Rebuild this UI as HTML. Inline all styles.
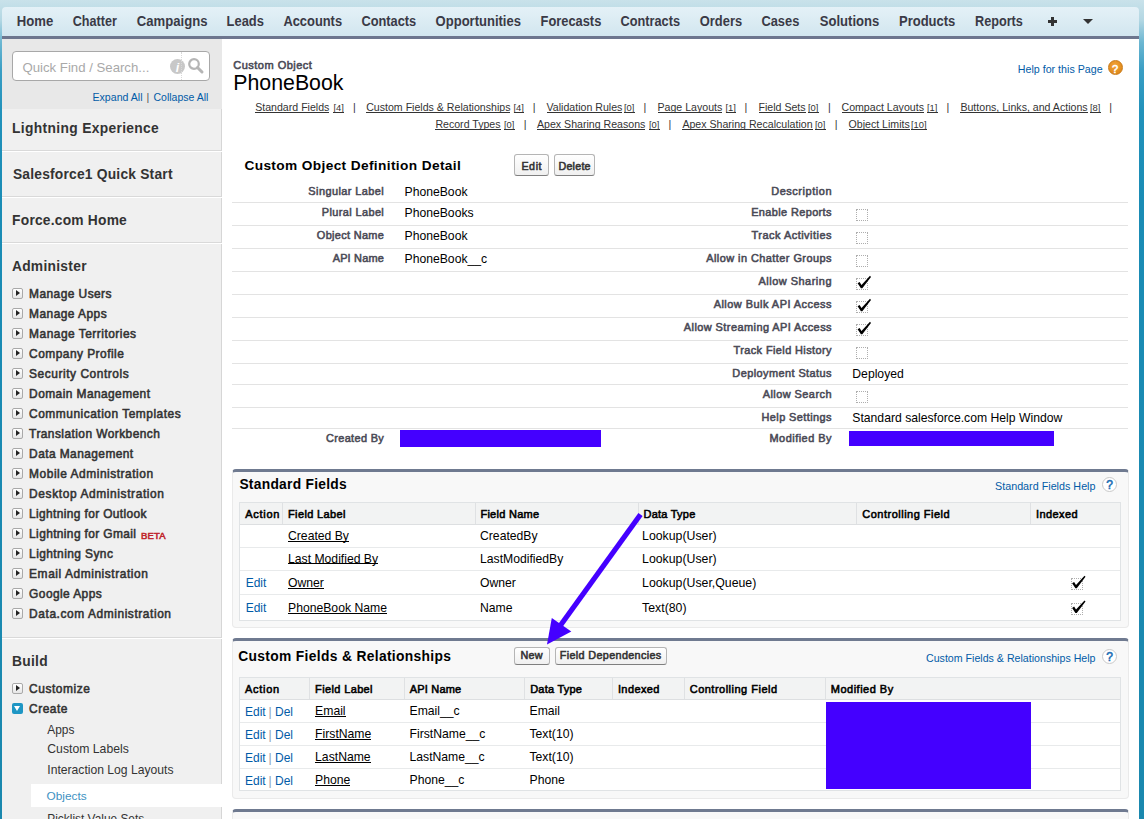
<!DOCTYPE html>
<html><head><meta charset="utf-8"><style>
html,body{margin:0;padding:0;}
body{width:1144px;height:819px;overflow:hidden;position:relative;font-family:"Liberation Sans",sans-serif;
background:linear-gradient(#c9e2ea 0px,#b3d7e3 20px,#6db7d2 42px,#3a9ec4 70px,#2292bb 110px,#1a8cb5 200px,#1a88ae 819px);}
.t{position:absolute;white-space:nowrap;}
.r{position:absolute;}
.btn{position:absolute;box-sizing:border-box;border:1px solid #b5b5b5;border-bottom-color:#7f7f7f;border-radius:3px;background:linear-gradient(#ffffff,#f0f0f0);
 color:#333;font-weight:bold;text-align:center;}
.panel{position:absolute;box-sizing:border-box;background:#f8f8f8;border:1px solid #eaeaea;border-top:3px solid #6f7a90;border-radius:4px;}
</style></head><body>
<div class="r" style="left:2px;top:7px;width:1137px;height:29px;background:linear-gradient(#e4f1f7,#d2e6ef);border-radius:4px 4px 0 0;"></div>
<div class="r" style="left:2px;top:36px;width:1137px;height:3px;background:#6d768e;"></div>
<div class="r" style="left:2px;top:39px;width:1137px;height:780px;background:#fff;"></div>
<div class="r" style="left:1048px;top:20px;width:9px;height:3px;background:#333;"></div>
<div class="r" style="left:1051px;top:17px;width:3px;height:9px;background:#333;"></div>
<div class="r" style="left:1083px;top:19px;width:0;height:0;border-left:5px solid transparent;border-right:5px solid transparent;border-top:5px solid #333;"></div>
<div class="r" style="left:2px;top:39px;width:220px;height:70px;background:#e8e8e8;"></div>
<div class="r" style="left:2px;top:109px;width:219px;height:41px;background:#f0f0f0;border-right:1px solid #d6d6d6;border-bottom:1px solid #d9d9d9;"></div>
<div class="r" style="left:2px;top:152px;width:219px;height:44px;background:#f0f0f0;border-right:1px solid #d6d6d6;border-bottom:1px solid #d9d9d9;"></div>
<div class="r" style="left:2px;top:198px;width:219px;height:44px;background:#f0f0f0;border-right:1px solid #d6d6d6;border-bottom:1px solid #d9d9d9;"></div>
<div class="r" style="left:2px;top:244px;width:219px;height:393px;background:#f0f0f0;border-right:1px solid #d6d6d6;border-bottom:1px solid #d9d9d9;"></div>
<div class="r" style="left:2px;top:639px;width:219px;height:180px;background:#f0f0f0;border-right:1px solid #d6d6d6;border-bottom:1px solid #d9d9d9;"></div>
<div class="r" style="left:12px;top:51px;width:196px;height:28px;background:#fff;border:1px solid #a8a8a8;border-radius:4px;"></div>
<div class="r" style="left:170px;top:59px;width:15px;height:15px;border-radius:50%;background:#c8c8c8;"></div>
<div class="r" style="left:181px;top:52px;width:0px;height:28px;border-left:1px dotted #d8d8d8;"></div>
<svg class="r" style="left:187px;top:57px" width="18" height="18" viewBox="0 0 18 18"><circle cx="7" cy="7" r="4.8" fill="none" stroke="#b5b5b5" stroke-width="2.2"/><line x1="10.5" y1="10.5" x2="15" y2="15" stroke="#b5b5b5" stroke-width="3" stroke-linecap="round"/></svg>
<div class="r" style="left:12px;top:288.1px;width:9px;height:9px;border:1px solid #a9a9a9;border-radius:2px;background:linear-gradient(#fff,#e6e6e6);"></div>
<div class="r" style="left:16px;top:290.1px;width:0;height:0;border-top:3px solid transparent;border-bottom:3px solid transparent;border-left:4px solid #222;"></div>
<div class="r" style="left:12px;top:308.1px;width:9px;height:9px;border:1px solid #a9a9a9;border-radius:2px;background:linear-gradient(#fff,#e6e6e6);"></div>
<div class="r" style="left:16px;top:310.1px;width:0;height:0;border-top:3px solid transparent;border-bottom:3px solid transparent;border-left:4px solid #222;"></div>
<div class="r" style="left:12px;top:328.1px;width:9px;height:9px;border:1px solid #a9a9a9;border-radius:2px;background:linear-gradient(#fff,#e6e6e6);"></div>
<div class="r" style="left:16px;top:330.1px;width:0;height:0;border-top:3px solid transparent;border-bottom:3px solid transparent;border-left:4px solid #222;"></div>
<div class="r" style="left:12px;top:348.1px;width:9px;height:9px;border:1px solid #a9a9a9;border-radius:2px;background:linear-gradient(#fff,#e6e6e6);"></div>
<div class="r" style="left:16px;top:350.1px;width:0;height:0;border-top:3px solid transparent;border-bottom:3px solid transparent;border-left:4px solid #222;"></div>
<div class="r" style="left:12px;top:368.1px;width:9px;height:9px;border:1px solid #a9a9a9;border-radius:2px;background:linear-gradient(#fff,#e6e6e6);"></div>
<div class="r" style="left:16px;top:370.1px;width:0;height:0;border-top:3px solid transparent;border-bottom:3px solid transparent;border-left:4px solid #222;"></div>
<div class="r" style="left:12px;top:388.1px;width:9px;height:9px;border:1px solid #a9a9a9;border-radius:2px;background:linear-gradient(#fff,#e6e6e6);"></div>
<div class="r" style="left:16px;top:390.1px;width:0;height:0;border-top:3px solid transparent;border-bottom:3px solid transparent;border-left:4px solid #222;"></div>
<div class="r" style="left:12px;top:408.1px;width:9px;height:9px;border:1px solid #a9a9a9;border-radius:2px;background:linear-gradient(#fff,#e6e6e6);"></div>
<div class="r" style="left:16px;top:410.1px;width:0;height:0;border-top:3px solid transparent;border-bottom:3px solid transparent;border-left:4px solid #222;"></div>
<div class="r" style="left:12px;top:428.1px;width:9px;height:9px;border:1px solid #a9a9a9;border-radius:2px;background:linear-gradient(#fff,#e6e6e6);"></div>
<div class="r" style="left:16px;top:430.1px;width:0;height:0;border-top:3px solid transparent;border-bottom:3px solid transparent;border-left:4px solid #222;"></div>
<div class="r" style="left:12px;top:448.1px;width:9px;height:9px;border:1px solid #a9a9a9;border-radius:2px;background:linear-gradient(#fff,#e6e6e6);"></div>
<div class="r" style="left:16px;top:450.1px;width:0;height:0;border-top:3px solid transparent;border-bottom:3px solid transparent;border-left:4px solid #222;"></div>
<div class="r" style="left:12px;top:468.1px;width:9px;height:9px;border:1px solid #a9a9a9;border-radius:2px;background:linear-gradient(#fff,#e6e6e6);"></div>
<div class="r" style="left:16px;top:470.1px;width:0;height:0;border-top:3px solid transparent;border-bottom:3px solid transparent;border-left:4px solid #222;"></div>
<div class="r" style="left:12px;top:488.1px;width:9px;height:9px;border:1px solid #a9a9a9;border-radius:2px;background:linear-gradient(#fff,#e6e6e6);"></div>
<div class="r" style="left:16px;top:490.1px;width:0;height:0;border-top:3px solid transparent;border-bottom:3px solid transparent;border-left:4px solid #222;"></div>
<div class="r" style="left:12px;top:508.1px;width:9px;height:9px;border:1px solid #a9a9a9;border-radius:2px;background:linear-gradient(#fff,#e6e6e6);"></div>
<div class="r" style="left:16px;top:510.1px;width:0;height:0;border-top:3px solid transparent;border-bottom:3px solid transparent;border-left:4px solid #222;"></div>
<div class="r" style="left:12px;top:528.1px;width:9px;height:9px;border:1px solid #a9a9a9;border-radius:2px;background:linear-gradient(#fff,#e6e6e6);"></div>
<div class="r" style="left:16px;top:530.1px;width:0;height:0;border-top:3px solid transparent;border-bottom:3px solid transparent;border-left:4px solid #222;"></div>
<div class="r" style="left:12px;top:548.1px;width:9px;height:9px;border:1px solid #a9a9a9;border-radius:2px;background:linear-gradient(#fff,#e6e6e6);"></div>
<div class="r" style="left:16px;top:550.1px;width:0;height:0;border-top:3px solid transparent;border-bottom:3px solid transparent;border-left:4px solid #222;"></div>
<div class="r" style="left:12px;top:568.1px;width:9px;height:9px;border:1px solid #a9a9a9;border-radius:2px;background:linear-gradient(#fff,#e6e6e6);"></div>
<div class="r" style="left:16px;top:570.1px;width:0;height:0;border-top:3px solid transparent;border-bottom:3px solid transparent;border-left:4px solid #222;"></div>
<div class="r" style="left:12px;top:588.1px;width:9px;height:9px;border:1px solid #a9a9a9;border-radius:2px;background:linear-gradient(#fff,#e6e6e6);"></div>
<div class="r" style="left:16px;top:590.1px;width:0;height:0;border-top:3px solid transparent;border-bottom:3px solid transparent;border-left:4px solid #222;"></div>
<div class="r" style="left:12px;top:608.1px;width:9px;height:9px;border:1px solid #a9a9a9;border-radius:2px;background:linear-gradient(#fff,#e6e6e6);"></div>
<div class="r" style="left:16px;top:610.1px;width:0;height:0;border-top:3px solid transparent;border-bottom:3px solid transparent;border-left:4px solid #222;"></div>
<div class="r" style="left:12px;top:683.3px;width:9px;height:9px;border:1px solid #a9a9a9;border-radius:2px;background:linear-gradient(#fff,#e6e6e6);"></div>
<div class="r" style="left:16px;top:685.3px;width:0;height:0;border-top:3px solid transparent;border-bottom:3px solid transparent;border-left:4px solid #222;"></div>
<div class="r" style="left:12px;top:703px;width:11px;height:11px;background:#1e96c4;border-radius:2px;"></div>
<div class="r" style="left:14px;top:706px;width:0;height:0;border-left:3.5px solid transparent;border-right:3.5px solid transparent;border-top:5px solid #fff;"></div>
<div class="r" style="left:31px;top:784px;width:191px;height:23px;background:#fff;"></div>
<div class="r" style="left:1107.5px;top:60px;width:15px;height:15px;border-radius:50%;background:radial-gradient(circle at 45% 35%,#f3a43a,#d8800f);box-sizing:border-box;border:1px solid #c97a18;"></div>
<div class="btn" style="left:514px;top:154px;width:35px;height:22px;"></div>
<div class="btn" style="left:554px;top:154px;width:41px;height:22px;"></div>
<div class="r" style="left:232px;top:202px;width:896px;height:1px;background:#e3e3e3;"></div>
<div class="r" style="left:232px;top:225px;width:896px;height:1px;background:#e3e3e3;"></div>
<div class="r" style="left:232px;top:248px;width:896px;height:1px;background:#e3e3e3;"></div>
<div class="r" style="left:232px;top:271px;width:896px;height:1px;background:#e3e3e3;"></div>
<div class="r" style="left:232px;top:294px;width:896px;height:1px;background:#e3e3e3;"></div>
<div class="r" style="left:232px;top:317px;width:896px;height:1px;background:#e3e3e3;"></div>
<div class="r" style="left:232px;top:340px;width:896px;height:1px;background:#e3e3e3;"></div>
<div class="r" style="left:232px;top:363px;width:896px;height:1px;background:#e3e3e3;"></div>
<div class="r" style="left:232px;top:384px;width:896px;height:1px;background:#e3e3e3;"></div>
<div class="r" style="left:232px;top:407px;width:896px;height:1px;background:#e3e3e3;"></div>
<div class="r" style="left:232px;top:428px;width:896px;height:1px;background:#e3e3e3;"></div>
<div class="r" style="left:400px;top:430px;width:201px;height:17px;background:#4400ff;"></div>
<div class="r" style="left:856px;top:209px;width:12px;height:12px;border:1px dotted #9a9a9a;box-sizing:border-box;opacity:.8;"></div>
<div class="r" style="left:856px;top:232px;width:12px;height:12px;border:1px dotted #9a9a9a;box-sizing:border-box;opacity:.8;"></div>
<div class="r" style="left:856px;top:255px;width:12px;height:12px;border:1px dotted #9a9a9a;box-sizing:border-box;opacity:.8;"></div>
<div class="r" style="left:856px;top:278px;width:12px;height:12px;border:1px dotted #9a9a9a;box-sizing:border-box;opacity:.8;"></div>
<div class="r" style="left:856px;top:301px;width:12px;height:12px;border:1px dotted #9a9a9a;box-sizing:border-box;opacity:.8;"></div>
<div class="r" style="left:856px;top:324px;width:12px;height:12px;border:1px dotted #9a9a9a;box-sizing:border-box;opacity:.8;"></div>
<div class="r" style="left:856px;top:347px;width:12px;height:12px;border:1px dotted #9a9a9a;box-sizing:border-box;opacity:.8;"></div>
<div class="r" style="left:856px;top:390.5px;width:12px;height:12px;border:1px dotted #9a9a9a;box-sizing:border-box;opacity:.8;"></div>
<div class="r" style="left:849px;top:431px;width:205px;height:15px;background:#4400ff;"></div>
<div class="panel" style="left:232px;top:469px;width:897px;height:159px;"></div>
<div class="r" style="left:1102.0px;top:476.5px;width:13px;height:13px;border-radius:50%;border:1px solid #c9c9c9;background:#fff;"></div>
<div class="r" style="left:239px;top:502px;width:882px;height:118.5px;background:#fff;border:1px solid #e0e3e5;box-sizing:border-box;"></div>
<div class="r" style="left:240px;top:503px;width:880px;height:21px;background:#f2f3f3;border-bottom:1px solid #dddfe1;"></div>
<div class="r" style="left:282px;top:503px;width:1px;height:21px;background:#dfe1e3;"></div>
<div class="r" style="left:474.5px;top:503px;width:1px;height:21px;background:#dfe1e3;"></div>
<div class="r" style="left:637.5px;top:503px;width:1px;height:21px;background:#dfe1e3;"></div>
<div class="r" style="left:856px;top:503px;width:1px;height:21px;background:#dfe1e3;"></div>
<div class="r" style="left:1030px;top:503px;width:1px;height:21px;background:#dfe1e3;"></div>
<div class="r" style="left:240px;top:547px;width:880px;height:1px;background:#e8eaeb;"></div>
<div class="r" style="left:240px;top:570px;width:880px;height:1px;background:#e8eaeb;"></div>
<div class="r" style="left:240px;top:594px;width:880px;height:1px;background:#e8eaeb;"></div>
<div class="r" style="left:1070.5px;top:577.9px;width:12px;height:12px;border:1px dotted #9a9a9a;box-sizing:border-box;opacity:.8;"></div>
<div class="r" style="left:1070.5px;top:602.6px;width:12px;height:12px;border:1px dotted #9a9a9a;box-sizing:border-box;opacity:.8;"></div>
<div class="panel" style="left:232px;top:638px;width:897px;height:161px;"></div>
<div class="btn" style="left:513.5px;top:647px;width:36px;height:18px;"></div>
<div class="btn" style="left:554.5px;top:647px;width:112px;height:18px;"></div>
<div class="r" style="left:1102.0px;top:648.5px;width:13px;height:13px;border-radius:50%;border:1px solid #c9c9c9;background:#fff;"></div>
<div class="r" style="left:239px;top:677px;width:882px;height:114px;background:#fff;border:1px solid #e0e3e5;box-sizing:border-box;"></div>
<div class="r" style="left:240px;top:678px;width:880px;height:21px;background:#f2f3f3;border-bottom:1px solid #dddfe1;"></div>
<div class="r" style="left:309px;top:678px;width:1px;height:21px;background:#dfe1e3;"></div>
<div class="r" style="left:404px;top:678px;width:1px;height:21px;background:#dfe1e3;"></div>
<div class="r" style="left:524px;top:678px;width:1px;height:21px;background:#dfe1e3;"></div>
<div class="r" style="left:612px;top:678px;width:1px;height:21px;background:#dfe1e3;"></div>
<div class="r" style="left:684px;top:678px;width:1px;height:21px;background:#dfe1e3;"></div>
<div class="r" style="left:825px;top:678px;width:1px;height:21px;background:#dfe1e3;"></div>
<div class="r" style="left:240px;top:722px;width:880px;height:1px;background:#e8eaeb;"></div>
<div class="r" style="left:240px;top:745px;width:880px;height:1px;background:#e8eaeb;"></div>
<div class="r" style="left:240px;top:768px;width:880px;height:1px;background:#e8eaeb;"></div>
<div class="r" style="left:826px;top:702px;width:205px;height:87px;background:#4400ff;"></div>
<div class="panel" style="left:232px;top:809px;width:897px;height:30px;"></div>
<div class="r" style="left:255.2px;top:112px;width:74.2px;height:1px;background:#333;"></div><div class="r" style="left:333.4px;top:112px;width:10.5px;height:1px;background:#333;"></div><div class="r" style="left:366.2px;top:112px;width:144.3px;height:1px;background:#333;"></div><div class="r" style="left:513.5px;top:112px;width:10.5px;height:1px;background:#333;"></div><div class="r" style="left:546.6px;top:112px;width:75.8px;height:1px;background:#333;"></div><div class="r" style="left:624px;top:112px;width:10.5px;height:1px;background:#333;"></div><div class="r" style="left:657.5px;top:112px;width:64.8px;height:1px;background:#333;"></div><div class="r" style="left:725.5px;top:112px;width:10.5px;height:1px;background:#333;"></div><div class="r" style="left:758.5px;top:112px;width:47.1px;height:1px;background:#333;"></div><div class="r" style="left:808px;top:112px;width:10.5px;height:1px;background:#333;"></div><div class="r" style="left:841.5px;top:112px;width:82.5px;height:1px;background:#333;"></div><div class="r" style="left:927px;top:112px;width:10.5px;height:1px;background:#333;"></div><div class="r" style="left:960.4px;top:112px;width:127.3px;height:1px;background:#333;"></div><div class="r" style="left:1090px;top:112px;width:10.5px;height:1px;background:#333;"></div><div class="r" style="left:435.4px;top:129px;width:65.2px;height:1px;background:#333;"></div><div class="r" style="left:504px;top:129px;width:10.5px;height:1px;background:#333;"></div><div class="r" style="left:537px;top:129px;width:108.4px;height:1px;background:#333;"></div><div class="r" style="left:649px;top:129px;width:10.5px;height:1px;background:#333;"></div><div class="r" style="left:682.4px;top:129px;width:130.2px;height:1px;background:#333;"></div><div class="r" style="left:815px;top:129px;width:10.5px;height:1px;background:#333;"></div><div class="r" style="left:848.5px;top:129px;width:61.3px;height:1px;background:#333;"></div><div class="r" style="left:911px;top:129px;width:15.7px;height:1px;background:#333;"></div><div class="r" style="left:288px;top:541px;width:61.0px;height:1px;background:#000;"></div><div class="r" style="left:288px;top:563px;width:90.2px;height:1px;background:#000;"></div><div class="r" style="left:288px;top:588px;width:35.9px;height:1px;background:#000;"></div><div class="r" style="left:288px;top:613px;width:99.0px;height:1px;background:#000;"></div><div class="r" style="left:315.1px;top:716px;width:30.5px;height:1px;background:#000;"></div><div class="r" style="left:315.1px;top:739px;width:56.3px;height:1px;background:#000;"></div><div class="r" style="left:315.1px;top:762px;width:55.6px;height:1px;background:#000;"></div><div class="r" style="left:315.1px;top:785px;width:35.3px;height:1px;background:#000;"></div>
<svg class="r" style="left:0;top:0" width="1144" height="819"><polygon points="857.6,283.3 859.6,282.0 861.5,285.0 870.0,275.8 871.0,276.9 862.3,288.3 860.9,288.3" fill="#000"/><polygon points="857.6,306.3 859.6,305.0 861.5,308.0 870.0,298.8 871.0,299.9 862.3,311.3 860.9,311.3" fill="#000"/><polygon points="857.6,329.3 859.6,328.0 861.5,331.0 870.0,321.8 871.0,322.9 862.3,334.3 860.9,334.3" fill="#000"/><polygon points="1072.1,583.2 1074.1,581.9 1076.0,584.9 1084.5,575.7 1085.5,576.8 1076.8,588.2 1075.4,588.2" fill="#000"/><polygon points="1072.1,607.9 1074.1,606.6 1076.0,609.6 1084.5,600.4 1085.5,601.5 1076.8,612.9 1075.4,612.9" fill="#000"/></svg>
<svg class="r" style="left:0;top:0" width="1144" height="819"><text x="16.8" y="26" font-size="13.8" font-weight="bold" fill="#3a3a46" text-anchor="start" textLength="36.5" lengthAdjust="spacingAndGlyphs">Home</text><text x="72.7" y="26" font-size="13.8" font-weight="bold" fill="#3a3a46" text-anchor="start" textLength="44.1" lengthAdjust="spacingAndGlyphs">Chatter</text><text x="136.8" y="26" font-size="13.8" font-weight="bold" fill="#3a3a46" text-anchor="start" textLength="70.7" lengthAdjust="spacingAndGlyphs">Campaigns</text><text x="226.60000000000002" y="26" font-size="13.8" font-weight="bold" fill="#3a3a46" text-anchor="start" textLength="37.3" lengthAdjust="spacingAndGlyphs">Leads</text><text x="283.40000000000003" y="26" font-size="13.8" font-weight="bold" fill="#3a3a46" text-anchor="start" textLength="58.7" lengthAdjust="spacingAndGlyphs">Accounts</text><text x="361.40000000000003" y="26" font-size="13.8" font-weight="bold" fill="#3a3a46" text-anchor="start" textLength="54.8" lengthAdjust="spacingAndGlyphs">Contacts</text><text x="435.6" y="26" font-size="13.8" font-weight="bold" fill="#3a3a46" text-anchor="start" textLength="85.4" lengthAdjust="spacingAndGlyphs">Opportunities</text><text x="540.5999999999999" y="26" font-size="13.8" font-weight="bold" fill="#3a3a46" text-anchor="start" textLength="60.7" lengthAdjust="spacingAndGlyphs">Forecasts</text><text x="620.5999999999999" y="26" font-size="13.8" font-weight="bold" fill="#3a3a46" text-anchor="start" textLength="59.4" lengthAdjust="spacingAndGlyphs">Contracts</text><text x="699.8" y="26" font-size="13.8" font-weight="bold" fill="#3a3a46" text-anchor="start" textLength="42.3" lengthAdjust="spacingAndGlyphs">Orders</text><text x="761.4" y="26" font-size="13.8" font-weight="bold" fill="#3a3a46" text-anchor="start" textLength="37.9" lengthAdjust="spacingAndGlyphs">Cases</text><text x="819.8" y="26" font-size="13.8" font-weight="bold" fill="#3a3a46" text-anchor="start" textLength="59.4" lengthAdjust="spacingAndGlyphs">Solutions</text><text x="899.0" y="26" font-size="13.8" font-weight="bold" fill="#3a3a46" text-anchor="start" textLength="56.3" lengthAdjust="spacingAndGlyphs">Products</text><text x="975.0" y="26" font-size="13.8" font-weight="bold" fill="#3a3a46" text-anchor="start" textLength="47.9" lengthAdjust="spacingAndGlyphs">Reports</text><text x="22.5" y="71.8" font-size="13.2" fill="#a9a9a9" text-anchor="start">Quick Find / Search...</text><text x="177.5" y="72" font-size="12.5" font-weight="bold" fill="#fff" text-anchor="middle" font-family="Liberation Sans" font-style="italic">i</text><text x="92.5" y="101" font-size="10.6" fill="#015ba7" text-anchor="start">Expand All</text><text x="146.5" y="101" font-size="10.6" fill="#555" text-anchor="start">|</text><text x="153.5" y="101" font-size="10.5" fill="#015ba7" text-anchor="start">Collapse All</text><text x="12.1" y="133.3" font-size="13.8" font-weight="bold" fill="#333" text-anchor="start" textLength="146.7" lengthAdjust="spacing">Lightning Experience</text><text x="12.9" y="179" font-size="13.8" font-weight="bold" fill="#333" text-anchor="start" textLength="159.6" lengthAdjust="spacing">Salesforce1 Quick Start</text><text x="12.1" y="224.8" font-size="13.8" font-weight="bold" fill="#333" text-anchor="start" textLength="114.7" lengthAdjust="spacing">Force.com Home</text><text x="11.9" y="270.8" font-size="13.8" font-weight="bold" fill="#333" text-anchor="start" textLength="74.6" lengthAdjust="spacing">Administer</text><text x="29.1" y="297.6" font-size="11.95" stroke="#333" stroke-width="0.55" fill="#333" text-anchor="start" textLength="82.4" lengthAdjust="spacing">Manage Users</text><text x="29.1" y="317.6" font-size="11.95" stroke="#333" stroke-width="0.55" fill="#333" text-anchor="start" textLength="77.5" lengthAdjust="spacing">Manage Apps</text><text x="29.1" y="337.6" font-size="11.95" stroke="#333" stroke-width="0.55" fill="#333" text-anchor="start" textLength="106.9" lengthAdjust="spacing">Manage Territories</text><text x="29.1" y="357.6" font-size="11.95" stroke="#333" stroke-width="0.55" fill="#333" text-anchor="start" textLength="94.7" lengthAdjust="spacing">Company Profile</text><text x="29.1" y="377.6" font-size="11.95" stroke="#333" stroke-width="0.55" fill="#333" text-anchor="start" textLength="99.5" lengthAdjust="spacing">Security Controls</text><text x="29.1" y="397.6" font-size="11.95" stroke="#333" stroke-width="0.55" fill="#333" text-anchor="start" textLength="120.9" lengthAdjust="spacing">Domain Management</text><text x="29.1" y="417.6" font-size="11.95" stroke="#333" stroke-width="0.55" fill="#333" text-anchor="start" textLength="151.6" lengthAdjust="spacing">Communication Templates</text><text x="29.1" y="437.6" font-size="11.95" stroke="#333" stroke-width="0.55" fill="#333" text-anchor="start" textLength="130.7" lengthAdjust="spacing">Translation Workbench</text><text x="29.1" y="457.6" font-size="11.95" stroke="#333" stroke-width="0.55" fill="#333" text-anchor="start" textLength="104.1" lengthAdjust="spacing">Data Management</text><text x="29.1" y="477.6" font-size="11.95" stroke="#333" stroke-width="0.55" fill="#333" text-anchor="start" textLength="124.0" lengthAdjust="spacing">Mobile Administration</text><text x="29.1" y="497.6" font-size="11.95" stroke="#333" stroke-width="0.55" fill="#333" text-anchor="start" textLength="134.9" lengthAdjust="spacing">Desktop Administration</text><text x="29.1" y="517.6" font-size="11.95" stroke="#333" stroke-width="0.55" fill="#333" text-anchor="start" textLength="117.4" lengthAdjust="spacing">Lightning for Outlook</text><text x="29.1" y="537.6" font-size="11.95" stroke="#333" stroke-width="0.55" fill="#333" text-anchor="start" textLength="106.9" lengthAdjust="spacing">Lightning for Gmail</text><text x="141" y="538.6" font-size="9.5" stroke="#c0262c" stroke-width="0.55" fill="#c0262c" text-anchor="start" textLength="24.6" lengthAdjust="spacing">BETA</text><text x="29.1" y="557.6" font-size="11.95" stroke="#333" stroke-width="0.55" fill="#333" text-anchor="start" textLength="83.8" lengthAdjust="spacing">Lightning Sync</text><text x="29.1" y="577.6" font-size="11.95" stroke="#333" stroke-width="0.55" fill="#333" text-anchor="start" textLength="118.8" lengthAdjust="spacing">Email Administration</text><text x="29.1" y="597.6" font-size="11.95" stroke="#333" stroke-width="0.55" fill="#333" text-anchor="start" textLength="72.6" lengthAdjust="spacing">Google Apps</text><text x="29.1" y="617.6" font-size="11.95" stroke="#333" stroke-width="0.55" fill="#333" text-anchor="start" textLength="141.9" lengthAdjust="spacing">Data.com Administration</text><text x="11.9" y="665.9" font-size="13.8" font-weight="bold" fill="#333" text-anchor="start" textLength="35.7" lengthAdjust="spacing">Build</text><text x="29.1" y="692.9" font-size="11.95" stroke="#333" stroke-width="0.55" fill="#333" text-anchor="start" textLength="60.7" lengthAdjust="spacing">Customize</text><text x="29.1" y="712.9" font-size="11.95" stroke="#333" stroke-width="0.55" fill="#333" text-anchor="start" textLength="38.4" lengthAdjust="spacing">Create</text><text x="47.3" y="734.4" font-size="11.9" fill="#333" text-anchor="start">Apps</text><text x="47.3" y="753.4" font-size="11.9" fill="#333" text-anchor="start" textLength="81.5" lengthAdjust="spacingAndGlyphs">Custom Labels</text><text x="47.3" y="773.5" font-size="12.15" fill="#333" text-anchor="start">Interaction Log Layouts</text><text x="46.6" y="799.8" font-size="11.8" fill="#3d91c2" text-anchor="start">Objects</text><text x="47.3" y="822.5" font-size="11.9" fill="#333" text-anchor="start">Picklist Value Sets</text><text x="233.3" y="69" font-size="11.05" stroke="#4a4a56" stroke-width="0.55" fill="#4a4a56" text-anchor="start" textLength="78.59" lengthAdjust="spacing">Custom Object</text><text x="233.3" y="89.8" font-size="21.3" fill="#000" text-anchor="start">PhoneBook</text><text x="1102.6" y="72.6" font-size="10.6" fill="#015ba7" text-anchor="end" textLength="84.8" lengthAdjust="spacingAndGlyphs">Help for this Page</text><text x="1115" y="72.5" font-size="11" stroke="#fff" stroke-width="0.55" fill="#fff" text-anchor="middle" textLength="6.72" lengthAdjust="spacing">?</text><text x="255.2" y="110.7" font-size="10.6" fill="#333" text-anchor="start">Standard Fields</text><text x="333.4" y="110.7" font-size="9.4" fill="#333" text-anchor="start">[4]</text><text x="353.09999999999997" y="110.7" font-size="10.6" fill="#333" text-anchor="start">|</text><text x="366.2" y="110.7" font-size="10.6" fill="#333" text-anchor="start">Custom Fields &amp; Relationships</text><text x="513.5" y="110.7" font-size="9.4" fill="#333" text-anchor="start">[4]</text><text x="532.7" y="110.7" font-size="10.6" fill="#333" text-anchor="start">|</text><text x="546.6" y="110.7" font-size="10.6" fill="#333" text-anchor="start">Validation Rules</text><text x="624" y="110.7" font-size="9.4" fill="#333" text-anchor="start">[0]</text><text x="643.6" y="110.7" font-size="10.6" fill="#333" text-anchor="start">|</text><text x="657.5" y="110.7" font-size="10.6" fill="#333" text-anchor="start">Page Layouts</text><text x="725.5" y="110.7" font-size="9.4" fill="#333" text-anchor="start">[1]</text><text x="744.5" y="110.7" font-size="10.6" fill="#333" text-anchor="start">|</text><text x="758.5" y="110.7" font-size="10.6" fill="#333" text-anchor="start">Field Sets</text><text x="808" y="110.7" font-size="9.4" fill="#333" text-anchor="start">[0]</text><text x="828.0" y="110.7" font-size="10.6" fill="#333" text-anchor="start">|</text><text x="841.5" y="110.7" font-size="10.6" fill="#333" text-anchor="start">Compact Layouts</text><text x="927" y="110.7" font-size="9.4" fill="#333" text-anchor="start">[1]</text><text x="946.5" y="110.7" font-size="10.6" fill="#333" text-anchor="start">|</text><text x="960.4" y="110.7" font-size="10.6" fill="#333" text-anchor="start">Buttons, Links, and Actions</text><text x="1090" y="110.7" font-size="9.4" fill="#333" text-anchor="start">[8]</text><text x="1109.2" y="110.7" font-size="10.6" fill="#333" text-anchor="start">|</text><text x="435.4" y="127.8" font-size="10.6" fill="#333" text-anchor="start">Record Types</text><text x="504" y="127.8" font-size="9.4" fill="#333" text-anchor="start">[0]</text><text x="523.7" y="127.8" font-size="10.6" fill="#333" text-anchor="start">|</text><text x="537" y="127.8" font-size="10.6" fill="#333" text-anchor="start">Apex Sharing Reasons</text><text x="649" y="127.8" font-size="9.4" fill="#333" text-anchor="start">[0]</text><text x="668.5" y="127.8" font-size="10.6" fill="#333" text-anchor="start">|</text><text x="682.4" y="127.8" font-size="10.6" fill="#333" text-anchor="start">Apex Sharing Recalculation</text><text x="815" y="127.8" font-size="9.4" fill="#333" text-anchor="start">[0]</text><text x="834.7" y="127.8" font-size="10.6" fill="#333" text-anchor="start">|</text><text x="848.5" y="127.8" font-size="10.6" fill="#333" text-anchor="start">Object Limits</text><text x="911" y="127.8" font-size="9.4" fill="#333" text-anchor="start">[10]</text><text x="244.4" y="170" font-size="13.7" font-weight="bold" fill="#000" text-anchor="start" textLength="216.4" lengthAdjust="spacing">Custom Object Definition Detail</text><text x="531.5" y="169.852" font-size="10.7" stroke="#333" stroke-width="0.55" fill="#333" text-anchor="middle" textLength="20.21" lengthAdjust="spacing">Edit</text><text x="574.5" y="169.852" font-size="10.7" stroke="#333" stroke-width="0.55" fill="#333" text-anchor="middle" textLength="32.12" lengthAdjust="spacing">Delete</text><text x="383.8" y="195" font-size="10.95" stroke="#4a4a56" stroke-width="0.55" fill="#4a4a56" text-anchor="end" textLength="75.45" lengthAdjust="spacing">Singular Label</text><text x="404.5" y="196.3" font-size="12.2" fill="#000" text-anchor="start">PhoneBook</text><text x="383.8" y="216" font-size="10.95" stroke="#4a4a56" stroke-width="0.55" fill="#4a4a56" text-anchor="end" textLength="62.07" lengthAdjust="spacing">Plural Label</text><text x="404.5" y="217.3" font-size="12.2" fill="#000" text-anchor="start">PhoneBooks</text><text x="383.8" y="239" font-size="10.95" stroke="#4a4a56" stroke-width="0.55" fill="#4a4a56" text-anchor="end" textLength="66.94" lengthAdjust="spacing">Object Name</text><text x="404.5" y="240.3" font-size="12.2" fill="#000" text-anchor="start">PhoneBook</text><text x="383.8" y="262" font-size="10.95" stroke="#4a4a56" stroke-width="0.55" fill="#4a4a56" text-anchor="end" textLength="51.12" lengthAdjust="spacing">API Name</text><text x="404.5" y="263.3" font-size="12.2" fill="#000" text-anchor="start">PhoneBook__c</text><text x="383.8" y="442" font-size="10.95" stroke="#4a4a56" stroke-width="0.55" fill="#4a4a56" text-anchor="end" textLength="57.81" lengthAdjust="spacing">Created By</text><text x="831.5" y="195" font-size="10.95" stroke="#4a4a56" stroke-width="0.55" fill="#4a4a56" text-anchor="end" textLength="60.24" lengthAdjust="spacing">Description</text><text x="831.5" y="216" font-size="10.95" stroke="#4a4a56" stroke-width="0.55" fill="#4a4a56" text-anchor="end" textLength="80.32" lengthAdjust="spacing">Enable Reports</text><text x="831.5" y="239" font-size="10.95" stroke="#4a4a56" stroke-width="0.55" fill="#4a4a56" text-anchor="end" textLength="79.94" lengthAdjust="spacing">Track Activities</text><text x="831.5" y="262" font-size="10.95" stroke="#4a4a56" stroke-width="0.55" fill="#4a4a56" text-anchor="end" textLength="125.32" lengthAdjust="spacing">Allow in Chatter Groups</text><text x="831.5" y="285" font-size="10.95" stroke="#4a4a56" stroke-width="0.55" fill="#4a4a56" text-anchor="end" textLength="73.0" lengthAdjust="spacing">Allow Sharing</text><text x="831.5" y="308" font-size="10.95" stroke="#4a4a56" stroke-width="0.55" fill="#4a4a56" text-anchor="end" textLength="117.85" lengthAdjust="spacing">Allow Bulk API Access</text><text x="831.5" y="331" font-size="10.95" stroke="#4a4a56" stroke-width="0.55" fill="#4a4a56" text-anchor="end" textLength="147.67" lengthAdjust="spacing">Allow Streaming API Access</text><text x="831.5" y="354" font-size="10.95" stroke="#4a4a56" stroke-width="0.55" fill="#4a4a56" text-anchor="end" textLength="97.98" lengthAdjust="spacing">Track Field History</text><text x="831.5" y="376.5" font-size="10.95" stroke="#4a4a56" stroke-width="0.55" fill="#4a4a56" text-anchor="end" textLength="99.18" lengthAdjust="spacing">Deployment Status</text><text x="852.3" y="377.5" font-size="12.2" fill="#000" text-anchor="start">Deployed</text><text x="831.5" y="397.5" font-size="10.95" stroke="#4a4a56" stroke-width="0.55" fill="#4a4a56" text-anchor="end" textLength="68.76" lengthAdjust="spacing">Allow Search</text><text x="831.5" y="421" font-size="10.95" stroke="#4a4a56" stroke-width="0.55" fill="#4a4a56" text-anchor="end" textLength="69.97" lengthAdjust="spacing">Help Settings</text><text x="852.3" y="422" font-size="12.2" fill="#000" text-anchor="start">Standard salesforce.com Help Window</text><text x="831.5" y="442" font-size="10.95" stroke="#4a4a56" stroke-width="0.55" fill="#4a4a56" text-anchor="end" textLength="62.05" lengthAdjust="spacing">Modified By</text><text x="239.4" y="489" font-size="13.8" font-weight="bold" fill="#000" text-anchor="start" textLength="107.3" lengthAdjust="spacing">Standard Fields</text><text x="1095.5" y="490" font-size="10.7" fill="#015ba7" text-anchor="end" textLength="100.5" lengthAdjust="spacingAndGlyphs">Standard Fields Help</text><text x="1109.5" y="488.5" font-size="12" stroke="#1f6fb5" stroke-width="0.55" fill="#1f6fb5" text-anchor="middle" textLength="7.33" lengthAdjust="spacing">?</text><text x="245.2" y="517.7" font-size="11" stroke="#000" stroke-width="0.55" fill="#000" text-anchor="start" textLength="34.22" lengthAdjust="spacing">Action</text><text x="288" y="517.7" font-size="11" stroke="#000" stroke-width="0.55" fill="#000" text-anchor="start" textLength="57.45" lengthAdjust="spacing">Field Label</text><text x="480.4" y="517.7" font-size="11" stroke="#000" stroke-width="0.55" fill="#000" text-anchor="start" textLength="58.68" lengthAdjust="spacing">Field Name</text><text x="643.5" y="517.7" font-size="11" stroke="#000" stroke-width="0.55" fill="#000" text-anchor="start" textLength="51.76" lengthAdjust="spacing">Data Type</text><text x="862.3" y="517.7" font-size="11" stroke="#000" stroke-width="0.55" fill="#000" text-anchor="start" textLength="87.38" lengthAdjust="spacing">Controlling Field</text><text x="1036" y="517.7" font-size="11" stroke="#000" stroke-width="0.55" fill="#000" text-anchor="start" textLength="41.57" lengthAdjust="spacing">Indexed</text><text x="288" y="539.8" font-size="12.2" fill="#000" text-anchor="start">Created By</text><text x="480" y="539.8" font-size="12.2" fill="#000" text-anchor="start">CreatedBy</text><text x="642.1" y="539.8" font-size="12.3" fill="#000" text-anchor="start">Lookup(User)</text><text x="288" y="562.5" font-size="12.2" fill="#000" text-anchor="start">Last Modified By</text><text x="480" y="562.5" font-size="12.2" fill="#000" text-anchor="start">LastModifiedBy</text><text x="642.1" y="562.5" font-size="12.3" fill="#000" text-anchor="start">Lookup(User)</text><text x="245.7" y="586.9" font-size="12" fill="#015ba7" text-anchor="start">Edit</text><text x="288" y="586.9" font-size="12.2" fill="#000" text-anchor="start">Owner</text><text x="480" y="586.9" font-size="12.2" fill="#000" text-anchor="start">Owner</text><text x="642.1" y="586.9" font-size="12.3" fill="#000" text-anchor="start">Lookup(User,Queue)</text><text x="245.7" y="611.6" font-size="12" fill="#015ba7" text-anchor="start">Edit</text><text x="288" y="611.6" font-size="12.2" fill="#000" text-anchor="start">PhoneBook Name</text><text x="480" y="611.6" font-size="12.2" fill="#000" text-anchor="start">Name</text><text x="642.1" y="611.6" font-size="12.3" fill="#000" text-anchor="start">Text(80)</text><text x="238.2" y="661" font-size="13.8" font-weight="bold" fill="#000" text-anchor="start" textLength="212.8" lengthAdjust="spacing">Custom Fields &amp; Relationships</text><text x="531.5" y="659.388" font-size="10.8" stroke="#333" stroke-width="0.55" fill="#333" text-anchor="middle" textLength="22.21" lengthAdjust="spacing">New</text><text x="610.5" y="659.388" font-size="10.8" stroke="#333" stroke-width="0.55" fill="#333" text-anchor="middle" textLength="101.43" lengthAdjust="spacing">Field Dependencies</text><text x="1095.5" y="662.3" font-size="10.7" fill="#015ba7" text-anchor="end" textLength="169.5" lengthAdjust="spacingAndGlyphs">Custom Fields &amp; Relationships Help</text><text x="1109.5" y="660.5" font-size="12" stroke="#1f6fb5" stroke-width="0.55" fill="#1f6fb5" text-anchor="middle" textLength="7.33" lengthAdjust="spacing">?</text><text x="245" y="692.5" font-size="11" stroke="#000" stroke-width="0.55" fill="#000" text-anchor="start" textLength="34.22" lengthAdjust="spacing">Action</text><text x="315.1" y="692.5" font-size="11" stroke="#000" stroke-width="0.55" fill="#000" text-anchor="start" textLength="57.45" lengthAdjust="spacing">Field Label</text><text x="409.8" y="692.5" font-size="11" stroke="#000" stroke-width="0.55" fill="#000" text-anchor="start" textLength="51.35" lengthAdjust="spacing">API Name</text><text x="530.2" y="692.5" font-size="11" stroke="#000" stroke-width="0.55" fill="#000" text-anchor="start" textLength="51.76" lengthAdjust="spacing">Data Type</text><text x="617.9" y="692.5" font-size="11" stroke="#000" stroke-width="0.55" fill="#000" text-anchor="start" textLength="41.57" lengthAdjust="spacing">Indexed</text><text x="689.7" y="692.5" font-size="11" stroke="#000" stroke-width="0.55" fill="#000" text-anchor="start" textLength="87.38" lengthAdjust="spacing">Controlling Field</text><text x="830.8" y="692.5" font-size="11" stroke="#000" stroke-width="0.55" fill="#000" text-anchor="start" textLength="62.33" lengthAdjust="spacing">Modified By</text><text x="245" y="716" font-size="12" fill="#015ba7" text-anchor="start">Edit</text><text x="268.5" y="716" font-size="12" fill="#8a9bb0" text-anchor="start">|</text><text x="275" y="716" font-size="12" fill="#015ba7" text-anchor="start">Del</text><text x="315.1" y="715" font-size="12.2" fill="#000" text-anchor="start">Email</text><text x="409.5" y="715" font-size="12.2" fill="#000" text-anchor="start">Email__c</text><text x="529.5" y="715" font-size="12.2" fill="#000" text-anchor="start">Email</text><text x="245" y="739" font-size="12" fill="#015ba7" text-anchor="start">Edit</text><text x="268.5" y="739" font-size="12" fill="#8a9bb0" text-anchor="start">|</text><text x="275" y="739" font-size="12" fill="#015ba7" text-anchor="start">Del</text><text x="315.1" y="738" font-size="12.2" fill="#000" text-anchor="start">FirstName</text><text x="409.5" y="738" font-size="12.2" fill="#000" text-anchor="start">FirstName__c</text><text x="529.5" y="738" font-size="12.2" fill="#000" text-anchor="start">Text(10)</text><text x="245" y="762" font-size="12" fill="#015ba7" text-anchor="start">Edit</text><text x="268.5" y="762" font-size="12" fill="#8a9bb0" text-anchor="start">|</text><text x="275" y="762" font-size="12" fill="#015ba7" text-anchor="start">Del</text><text x="315.1" y="761" font-size="12.2" fill="#000" text-anchor="start">LastName</text><text x="409.5" y="761" font-size="12.2" fill="#000" text-anchor="start">LastName__c</text><text x="529.5" y="761" font-size="12.2" fill="#000" text-anchor="start">Text(10)</text><text x="245" y="785" font-size="12" fill="#015ba7" text-anchor="start">Edit</text><text x="268.5" y="785" font-size="12" fill="#8a9bb0" text-anchor="start">|</text><text x="275" y="785" font-size="12" fill="#015ba7" text-anchor="start">Del</text><text x="315.1" y="784" font-size="12.2" fill="#000" text-anchor="start">Phone</text><text x="409.5" y="784" font-size="12.2" fill="#000" text-anchor="start">Phone__c</text><text x="529.5" y="784" font-size="12.2" fill="#000" text-anchor="start">Phone</text></svg>
<svg class="r" style="left:0;top:0" width="1144" height="819" viewBox="0 0 1144 819"><line x1="640.5" y1="514.5" x2="560" y2="626" stroke="#4400ff" stroke-width="5.2" stroke-linecap="butt"/><polygon points="547,644.6 551.8,617.9 571.3,631.4" fill="#4400ff"/></svg>
</body></html>
